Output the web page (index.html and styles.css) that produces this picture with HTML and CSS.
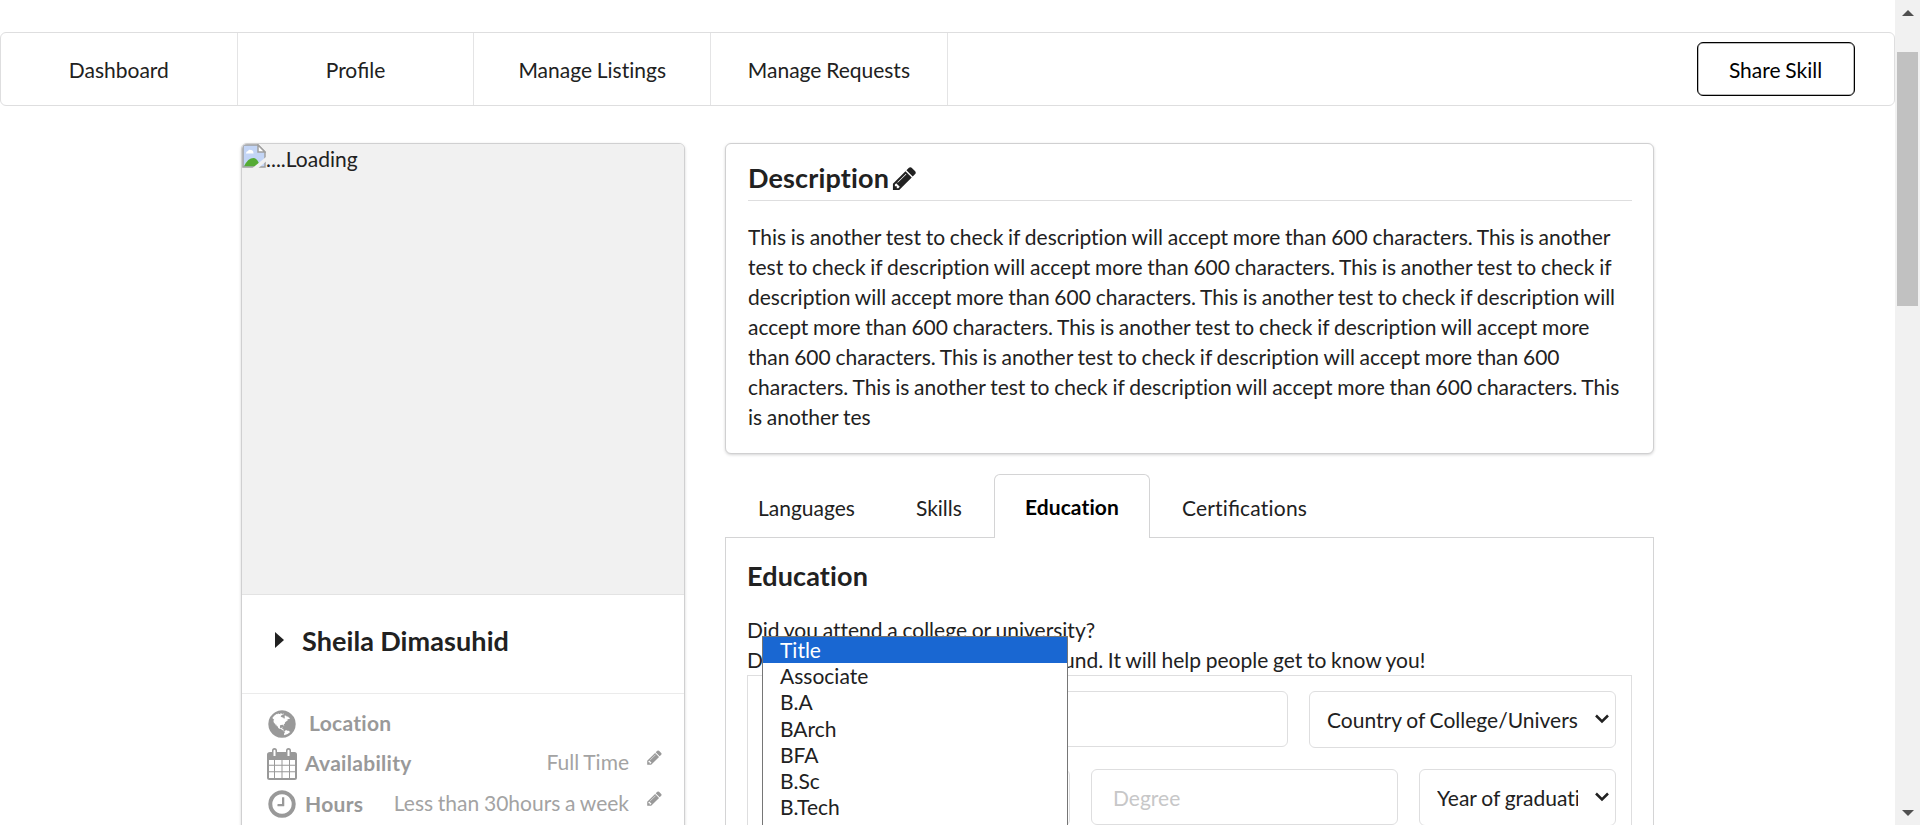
FILE: index.html
```html
<!DOCTYPE html>
<html lang="en">
<head>
<meta charset="utf-8">
<title>Profile</title>
<link rel="stylesheet" href="styles.css">
</head>
<body>
<svg class="defs" width="0" height="0">
  <symbol id="pencil" viewBox="0 0 1792 1792"><path d="M491 1536l91-91-235-235-91 91v107h128v128h107zm523-928q0-22-22-22-10 0-17 7l-542 542q-7 7-7 17 0 22 22 22 10 0 17-7l542-542q7-7 7-17zm-54-192l416 416-832 832h-416v-416zm683 96q0 53-37 90l-166 166-416-416 166-165q36-38 90-38 53 0 91 38l235 234q37 39 37 91z"/></symbol>
</svg>
<div class="screen">
  <main class="page">
    <nav class="menu">
      <a class="menu-item">Dashboard</a>
      <a class="menu-item">Pro<span class="liga">fi</span>le</a>
      <a class="menu-item">Manage Listings</a>
      <a class="menu-item">Manage Requests</a>
      <a class="share">Share Skill</a>
    </nav>
    <div class="columns">
      <aside class="card profile">
        <div class="photo">
          <svg class="broken" width="24" height="24" viewBox="0 0 24 24">
            <path d="M1 1H16L23 8V23H1Z" fill="#c3d5f6" stroke="#a0a0a0" stroke-width="1.5"/>
            <path d="M4 9.500q0-2.500 2-2.500 1-2 3-1 2.500 0 2.500 3.500Z" fill="#fff"/>
            <path d="M2 22.300q4-8.300 9.500-8.300 4 0 6.500 8.300Z" fill="#55ab35"/>
            <path d="M16 1V8H23Z" fill="#fff" stroke="#a0a0a0" stroke-width="1.500"/>
            <path d="M10.500 24L24 13V17.500L16.500 24Z" fill="#f1f1f1"/>
          </svg><span>....Loading</span>
        </div>
        <div class="name">
          <svg width="9" height="16" viewBox="0 0 9 16"><path d="M0 0L9 8L0 16Z"/></svg>
          <span>Sheila Dimasuhid</span>
        </div>
        <div class="facts">
          <div class="fact location">
            <svg class="fact-icon" width="32" height="32" viewBox="0 0 1792 1792"><path d="M896 128q209 0 385.500 103t279.500 279.500 103 385.500-103 385.500-279.500 279.500-385.500 103-385.500-103-279.500-279.500-103-385.500 103-385.500 279.500-279.500 385.500-103zm274 521q-2 1-9.500 9.500t-13.500 9.500q2 0 4.500-5t5-11 3.500-7q6-7 22-15 14-6 52-12 34-8 51 11-2-2 9.500-13t14.500-12q3-2 15-4.500t15-7.500l2-22q-12 1-17.500-7t-6.500-21q0 2-6 8 0-7-4.500-8t-11.500 1-9 1q-10-3-15-7.500t-8-16.500-4-15q-2-5-9.500-11t-9.500-10q-1-2-2.500-5.500t-3-6.500-4-5.500-5.500-2.500-7 5-7.500 10-4.500 5q-3-2-6-1.500t-4.500 1-4.500 3-5 3.500q-3 2-8.500 3t-8.500 2q15-5-1-11-10-4-16-3 9-4 7.500-12t-8.500-14h5q-1-4-8.500-8.500t-17.500-8.500-13-6q-8-5-34-9.500t-33-.5q-5 6-4.500 10.500t4 14 3.500 12.500q1 6-5.500 13t-6.500 12q0 7 14 15.500t10 21.500q-3 8-16 16t-16 12q-5 8-1.500 18.500t10.500 16.500q2 2 1.500 4t-3.500 4.500-5.500 4-6.500 3.500l-3 2q-11 5-20.500-6t-13.500-26q-7-25-16-30-23-8-29 1-5-13-41-26-25-9-58-4 6-1 0-15-7-15-19-12 3-6 4-17.500t1-13.500q3-13 12-23 1-1 7-8.500t9.500-13.500.5-6q35 4 50-11 5-5 11.500-17t10.500-17q9-6 14-5.500t14.500 5.500 14.500 5q14 1 15.500-11t-7.500-20q12 1 3-17-4-7-8-9-12-4-27 5-8 4 2 8-1-1-9.500 10.500t-16.500 17.500-16-5q-1-1-5.500-13.500t-9.500-13.500q-8 0-16 15 3-8-11-15t-24-8q19-12-8-27-7-4-20.500-5t-19.500 4q-5 7-5.500 11.500t5 8 10.500 5.500 11.500 4 8.500 3q14 10 8 14-2 1-8.500 3.500t-11.500 4.500-6 4q-3 4 0 14t-2 14q-5-5-9-17.500t-7-16.500q7 9-25 6l-10-1q-4 0-16 2t-20.500 1-13.500-8q-4-8 0-20 1-4 4-2-4-3-11-9.500t-10-8.500q-46 15-94 41 6 1 12-1 5-2 13-6.500t10-5.500q34-14 42-7l5-5q14 16 20 25-7-4-30-1-20 6-22 12 7 12 5 18-4-3-11.500-10t-14.500-11-15-5q-16 0-22 1-146 80-235 222 7 7 12 8 4 1 5 9t2.500 11 11.500-3q9 8 3 19 1-1 44 27 19 17 21 21 3 11-10 18-1-2-9-9t-9-4q-3 5 .5 18.500t10.500 12.500q-7 0-9.500 16t-2.500 35.500-1 23.500l2 1q-3 12 5.500 34.500t21.500 19.500q-13 3 20 43 6 8 8 9 3 2 12 7.500t15 10 10 10.500q4 5 10 22.500t14 23.500q-2 6 9.500 20t10.500 23q-1 0-2.500 1t-2.500 1q3 7 15.500 14t15.500 13q1 3 2 10t3 11 8 2q2-20-24-62-15-25-17-29-3-5-5.500-15.500t-4.500-14.500q2 0 6 1.500t8.500 3.500 7.500 4 2 3q-3 7 2 17.500t12 18.500 17 19 12 13q6 6 14 19.500t0 13.500q9 0 20 10.500t17 19.500q5 8 8 26t5 24q2 7 8.500 13.500t12.500 9.500l16 8 13 7q5 2 18.500 10.500t21.500 11.500q10 4 16 4t14.500-2.500 13.500-3.500q15-2 29 15t21 21q36 19 55 11-2 1 .5 7.500t8 15.500 9 14.500 5.500 8.500q5 6 18 15t18 15q6-4 7-9-3 8 7 20t18 10q14-3 14-32-31 15-49-18 0-1-2.500-5.500t-4-8.500-2.500-8.500 0-7.500 5-3q9 0 10-3.500t-2-12.500-4-13q-1-8-11-20t-12-15q-5 9-16 8t-16-9q0 1-1.500 5.500t-1.500 6.500q-13 0-15-1 1-3 2.500-17.500t3.500-22.500q1-4 5.500-12t7.500-14.500 4-12.500-4.500-9.500-17.500-2.500q-19 1-26 20-1 3-3 10.500t-5 11.500-9 7q-7 3-24 2t-24-5q-13-8-22.500-29t-9.500-37q0-10 2.500-26.500t3-25-5.500-24.500q3-2 9-9.500t10-10.500q2-1 4.500-1.500t4.500 0 4-1.500 3-6q-1-1-4-3-3-3-4-3 7 3 28.500-1.500t27.500 1.500q15 11 22-2 0-1-2.500-9.500t-.5-13.500q5 27 29 9 3 3 15.500 5t17.500 5q3 2 7 5.500t5.500 4.500 5-.5 8.500-6.500q10 14 12 24 11 40 19 44 7 3 11 2t4.500-9.500 0-14-1.500-12.500l-1-8v-18l-1-8q-15-3-18.500-12t1.500-18.500 15-18.500q1-1 8-3.500t15.500-6.500 12.500-8q21-19 15-35 7 0 11-9-1 0-5-3t-7.500-5-4.500-2q9-5 2-16 5-3 7.500-11t7.500-10q9 12 21 2 8-8 1-16 5-7 20.500-10.500t18.500-9.500q7 2 8-2t1-12 3-12q4-5 15-9t13-5l17-11q3-4 0-4 18 2 31-11 10-11-6-20 3-6-3-9.500t-15-5.500q3-1 11.500-.5t10.500-1.500q15-10-7-16-17-5-43 12zm-163 877q206-36 351-189-3-3-12.500-4.500t-12.500-3.500q-18-7-24-8 1-7-2.500-13t-8-9-12.500-8-11-7q-2-2-7-6t-7-5.500-7.500-4.500-8.500-2-10 1l-3 1q-3 1-5.500 2.500t-5.500 3-4 3 0 2.500q-21-17-36-22-5-1-11-5.500t-10.500-7-10-1.500-11.500 7q-5 5-6 15t-2 13q-7-5 0-17.500t2-18.500q-3-6-10.500-4.500t-12 4.500-11.500 8.500-9 6.500-8.500 5.500-8.500 7.500q-3 4-6 12t-5 11q-2-4-11.500-6.500t-9.500-5.500q2 10 4 35t5 38q7 31-12 48-27 25-29 40-4 22 12 26 0 7-8 20.500t-7 21.500q0 6 2 16z"/></svg>
            <b>Location</b>
          </div>
          <div class="fact">
            <svg class="fact-icon calendar" width="32" height="32" viewBox="0 0 32 32"><path fill-rule="evenodd" d="M4 4H6V2.500Q6 0 8.500 0T11 2.500V4H20V2.500Q20 0 22.500 0T25 2.500V4H28.500Q31 4 31 6.500V29.500Q31 32 28.500 32H3.500Q1 32 1 29.500V6.500Q1 4 4 4ZM7.500 3V8H9.500V3Q9.500 1.800 8.500 1.800T7.500 3ZM21.500 3V8H23.500V3Q23.500 1.800 22.500 1.800T21.500 3ZM3 12V16.800H8V12ZM9 12V16.800H15.500V12ZM16.500 12V16.800H23V12ZM24 12V16.800H29V12ZM3 17.800V23.200H8V17.800ZM9 17.800V23.200H15.500V17.800ZM16.500 17.800V23.200H23V17.800ZM24 17.800V23.200H29V17.800ZM3 24.200V30H8V24.200ZM9 24.200V30H15.500V24.200ZM16.500 24.200V30H23V24.200ZM24 24.200V30H29V24.200Z"/></svg>
            <b>Availability</b>
            <span class="value">Full Time</span>
            <svg class="edit"><use href="#pencil"/></svg>
          </div>
          <div class="fact hours">
            <svg class="fact-icon" width="32" height="32" viewBox="0 0 1792 1792"><path d="M1024 544v448q0 14-9 23t-23 9h-320q-14 0-23-9t-9-23v-64q0-14 9-23t23-9h224v-352q0-14 9-23t23-9h64q14 0 23 9t9 23zm416 352q0-148-73-273t-198-198-273-73-273 73-198 198-73 273 73 273 198 198 273 73 273-73 198-198 73-273zm224 0q0 209-103 385.500t-279.500 279.500-385.500 103-385.500-103-279.500-279.500-103-385.500 103-385.500 279.500-279.500 385.500-103 385.500 103 279.500 279.500 103 385.500z"/></svg>
            <b>Hours</b>
            <span class="value">Less than 30hours a week</span>
            <svg class="edit"><use href="#pencil"/></svg>
          </div>
        </div>
      </aside>
      <section class="main">
        <div class="card description">
          <h3>Description<svg class="pencil"><use href="#pencil"/></svg></h3>
          <p>This is another test to check if description will accept more than 600 characters. This is another<br>test to check if description will accept more than 600 characters. This is another test to check if<br>description will accept more than 600 characters. This is another test to check if description will<br>accept more than 600 characters. This is another test to check if description will accept more<br>than 600 characters. This is another test to check if description will accept more than 600<br>characters. This is another test to check if description will accept more than 600 characters. This<br>is another tes</p>
        </div>
        <div class="tabs">
          <a class="tab">Languages</a>
          <a class="tab">Skills</a>
          <a class="tab active">Education</a>
          <a class="tab">Certi<span class="liga">fi</span>cations</a>
        </div>
        <div class="panel">
          <h3>Education</h3>
          <div class="intro">Did you attend a college or university?<br>Describe your educational background. It will help people get to know you!</div>
          <div class="form">
            <div class="row">
              <div class="field college"></div>
              <div class="field select country"><span>Country of College/University</span><svg class="chevron" width="14" height="10" viewBox="0 0 14 10"><path d="M1 1.500L7 7.500L13 1.500"/></svg></div>
            </div>
            <div class="row">
              <div class="field select title"></div>
              <div class="field degree">Degree</div>
              <div class="field select year"><span>Year of graduation</span><svg class="chevron" width="14" height="10" viewBox="0 0 14 10"><path d="M1 1.500L7 7.500L13 1.500"/></svg></div>
            </div>
          </div>
          <div class="options">
            <div class="option selected">Title</div>
            <div class="option">Associate</div>
            <div class="option">B.A</div>
            <div class="option">BArch</div>
            <div class="option">BFA</div>
            <div class="option">B.Sc</div>
            <div class="option">B.Tech</div>
            <div class="option"></div>
          </div>
        </div>
      </section>
    </div>
  </main>
  <div class="scrollbar">
    <svg width="12" height="6" viewBox="0 0 12 6"><path d="M0 6L6 0L12 6Z"/></svg>
    <div class="thumb"></div>
    <svg class="down" width="12" height="6" viewBox="0 0 12 6"><path d="M0 0L6 6L12 0Z"/></svg>
  </div>
</div>
</body>
</html>
```

FILE: styles.css
```css
* { box-sizing: border-box; }
body {
  margin: 0;
  overflow: hidden;
  background: #fff;
  color: #212121;
  font: 21px/30px Lato, sans-serif;
  font-variant-ligatures: none;
  word-spacing: -0.650px;
}
h3 { margin: 0; font-size: 27px; line-height: 34px; font-weight: 700; letter-spacing: 0.150px; }
p { margin: 0; }
svg { flex: none; }
.defs { display: block; }
.liga { font-variant-ligatures: normal; letter-spacing: 0; }
.screen { display: flex; height: 825px; overflow: hidden; }
.page { flex: 1; padding-top: 32px; height: 825px; overflow: hidden; }

.menu {
  display: flex;
  align-items: center;
  height: 74px;
  border: 1px solid #dededf;
  border-radius: 6px;
}
.menu-item {
  width: 236.700px;
  height: 72px;
  line-height: 73px;
  text-align: center;
  border-right: 1.500px solid #e4e4e5;
}
.share {
  width: 158px;
  height: 54px;
  margin: -1px 39px 0 auto;
  padding-right: 1px;
  border: 1.500px solid #000;
  border-radius: 6px;
  box-shadow: inset 0 0 0 0.500px #777;
  color: #000;
  line-height: 53px;
  text-align: center;
}

.columns { display: flex; align-items: flex-start; gap: 40px; padding: 37px 0 0 241px; }
.card {
  border: 1px solid #d0d0d1;
  border-radius: 6px;
  box-shadow: 0 1px 3px #d4d4d5;
  background: #fff;
}
.profile { width: 444px; height: 760px; overflow: hidden; }
.photo {
  display: flex;
  height: 451px;
  background: #f1f1f1;
  border-bottom: 1px solid #e3e3e3;
}
.name {
  display: flex;
  align-items: center;
  gap: 18px;
  height: 99px;
  padding: 0 0 6px 33px;
  border-bottom: 1px solid #ebebeb;
  font-size: 27px;
  font-weight: 700;
  letter-spacing: 0.100px;
}
.name svg { margin-top: -3px; fill: #212121; }
.facts { padding: 13px 21px 0 24px; color: #999; }
.fact { display: flex; align-items: center; height: 41px; }
.fact-icon { margin-right: 7px; fill: #999; }
.calendar { margin-top: 2px; }
.fact b { letter-spacing: 0.300px; }
.value { margin: -2px 17px 0 auto; color: #a3a3a3; }
.location .fact-icon { margin-right: 11px; }
.location { height: 34px; padding-bottom: 1px; margin-bottom: 1px; }
.location b { margin-top: -2px; }
.edit { width: 17px; height: 17px; margin-top: -11px; fill: #999; }

.main { width: 929px; }
.description { height: 311px; padding: 17px 21px 0 22px; }
.description h3 {
  display: flex;
  align-items: center;
  height: 40px;
  padding-bottom: 5px;
  border-bottom: 1px solid #dededf;
}
.description p { margin-top: 21px; white-space: nowrap; }
.pencil { width: 27px; height: 27px; margin-left: 2px; fill: #212121; }

.tabs { display: flex; height: 64px; margin-top: 20px; border-bottom: 1px solid #d4d4d5; }
.tab { height: 64px; padding: 3px 32px 0 32px; line-height: 61px; }
.tab:first-child { padding: 3px 29px 0 33px; }
.tab:last-child { letter-spacing: 0.200px; }
.tab.active {
  padding: 1px 30px 0;
  border: 1px solid #d4d4d5;
  border-bottom: 0;
  border-radius: 6px 6px 0 0;
  background: #fff;
  color: #000;
  font-weight: 700;
  letter-spacing: 0.100px;
}
.panel {
  position: relative;
  height: 320px;
  padding: 21px 21px 0;
  border: 1px solid #d4d4d5;
  border-top: 0;
}
.intro { margin-top: 22px; white-space: nowrap; }
.form { height: 300px; padding: 15px 15px 0; border: 1px solid #dededf; }
.row { display: flex; gap: 21px; margin-bottom: 21px; }
.field {
  height: 56px;
  padding: 0 21px;
  border: 1px solid #dededf;
  border-radius: 6px;
  line-height: 55px;
}
.select { display: flex; align-items: center; height: 57px; padding: 0 6px 0 17px; }
.select span { flex: 1; min-width: 0; overflow: hidden; white-space: nowrap; }
.college { flex: 1; }
.country, .title, .degree { flex: none; width: 307px; }
.degree { color: #c7c7c8; }
.year { flex: 1; min-width: 0; }
.chevron { margin: -2px 0 0 17px; fill: none; stroke: #212121; stroke-width: 2.500; }

.options {
  position: absolute;
  top: 98px;
  left: 36px;
  width: 306px;
  border: 1px solid #767676;
  background: #fff;
}
.option { height: 26.200px; padding-left: 17px; line-height: 25px; }
.selected { background: #1967d2; color: #fff; }

.scrollbar {
  display: flex;
  flex-direction: column;
  align-items: center;
  width: 25px;
  padding: 10px 0 9px;
  background: #f1f1f1;
}
.scrollbar svg { fill: #505050; }
.thumb { width: 21px; height: 254px; margin-top: 36px; background: #c1c1c1; }
.down { margin-top: auto; }
```
